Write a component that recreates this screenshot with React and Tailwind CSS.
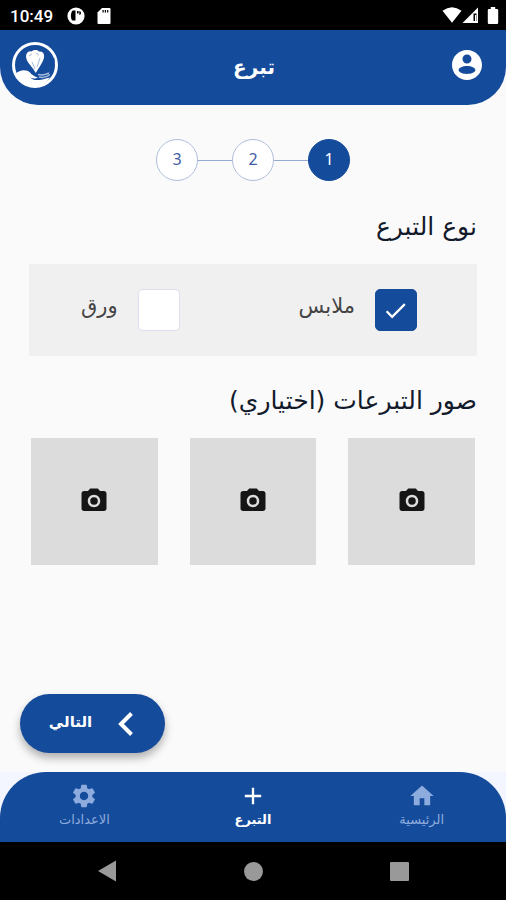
import React, { useState } from "react";
import {
  MdAdd,
  MdCheck,
  MdHome,
  MdSettings,
} from "react-icons/md";

function StatusBar() {
  return (
    <div dir="ltr" className="flex h-[30px] items-center justify-between bg-black pr-1 pl-[10px] font-['Roboto',sans-serif] text-white">
      <div className="flex items-center pt-[2px]">
        <span className="text-[17px] leading-5 font-medium">10:49</span>
        <svg viewBox="0 0 18 18" className="ml-[14px] size-[18px]" aria-hidden="true">
          <circle cx="9" cy="9" r="8.6" fill="#fff" />
          <path d="M6 3.5C3.600 4.200 3.200 12 5.400 13.500H8.500V3.500Z" fill="#000" />
          <path d="M10 4h1.600v2.500H10zM12.300 4c2.300.2 2.300 3.800 0 4z" fill="#000" />
        </svg>
        <svg viewBox="0 0 14 16" className="ml-[12px] h-4 w-[14px]" aria-hidden="true">
          <path d="M5 0H12.500Q13.500 0 13.500 1V15Q13.500 16 12.500 16H1.500Q.5 16 .5 15V4.500Z" fill="#fff" />
          <path d="M5.500 2h1.200v2.500H5.500zM7.800 2H9v2.500H7.800zM10.100 2h1.200v2.500h-1.200z" fill="#000" />
        </svg>
      </div>
      <div className="flex items-center">
        <svg viewBox="0 0 20 16" className="h-4 w-5" aria-hidden="true">
          <path d="M.5 3.800Q10-3.200 19.500 3.800L10 15.800Z" fill="#fff" />
        </svg>
        <svg viewBox="0 0 17 17" className="size-[17px]" aria-hidden="true">
          <path d="M16 .5V16H.5Z" fill="#fff" />
          <path d="M11.500 6.500h3V14h-3z" fill="#000" />
          <path d="M13 8h1.200v6H13z" fill="#fff" />
        </svg>
        <svg viewBox="0 0 12 17" className="mr-[3px] ml-2 h-[17px] w-3" aria-hidden="true">
          <path d="M3.800 0h4.400v2H10q1.200 0 1.200 1.200v12.600Q11.200 17 10 17H2Q.8 17 .8 15.800V3.200Q.8 2 2 2h1.800Z" fill="#fff" />
        </svg>
      </div>
    </div>
  );
}

function AccountIcon() {
  return (
    <svg viewBox="0 0 24 24" className="size-9" fill="currentColor" aria-hidden="true">
      <path d="M12 2C6.480 2 2 6.480 2 12s4.480 10 10 10 10-4.480 10-10S17.520 2 12 2zm0 3c1.660 0 3 1.340 3 3s-1.340 3-3 3-3-1.340-3-3 1.340-3 3-3zm0 13c-3 0-5.600-1-5.600-2.600S9 12.700 12 12.700s5.600 1.100 5.600 2.700S15 18 12 18z" />
    </svg>
  );
}

function CameraIcon() {
  return (
    <svg viewBox="0 0 24 24" className="size-[30px] text-[#151515]" fill="currentColor" aria-hidden="true">
      <circle cx="12" cy="12" r="3" />
      <path d="M9 2 7.170 4H4c-1.100 0-2 .9-2 2v12c0 1.100.9 2 2 2h16c1.100 0 2-.9 2-2V6c0-1.100-.9-2-2-2h-3.170L15 2H9zm3 15c-2.760 0-5-2.240-5-5s2.240-5 5-5 5 2.240 5 5-2.240 5-5 5z" />
    </svg>
  );
}

function CharityLogo() {
  return (
    <svg viewBox="0 0 48 48" className="size-12" role="img" aria-label="شعار">
      <circle cx="24" cy="24" r="21.500" fill="none" stroke="#fff" strokeWidth="3" />
      <path d="M15.500 18C14 13 17 9.500 20.500 10.500C23 8.500 26 8.600 28 10.500C32 9.800 34.300 13.500 32.600 18C31.500 22 27.500 27 24.800 32C22.300 27 16.800 22.500 15.500 18Z" fill="#fff" />
      <path d="M18 15l3-2M25 12l3 2M21 21l3 7M29 17l-3 9" fill="none" stroke="#7d9ccc" strokeWidth=".7" />
      <path d="M4.500 33C9 28 16 28.500 19 31.500C21 34 23.500 35.500 27 36.500C24 38 21.500 37.500 19 36.200C23 40.500 28 39.500 39 36.500C34 44.500 27 46.500 20 45C12 43.500 7 39 4.500 33Z" fill="#fff" />
      <path d="M28 36c4 1 8 .2 11-2.500M27 33.500c4 1 8 0 11-1.500" fill="none" stroke="#a8bddf" strokeWidth="1.400" />
      <path d="M41 16v6l2 3M43 17v5" fill="none" stroke="#144b9b" strokeWidth="1" />
    </svg>
  );
}

function Header() {
  return (
    <header className="flex h-[75px] items-center justify-between rounded-b-[38px] bg-[#144b9b] pr-[21px] pb-[6px] pl-[11px] text-white">
      <button type="button" aria-label="الحساب">
        <AccountIcon />
      </button>
      <h1 className="pt-1 text-[20px] leading-8 font-bold">تبرع</h1>
      <CharityLogo />
    </header>
  );
}

function Stepper() {
  const base = "flex size-[42px] items-center justify-center rounded-full border pb-[2px] text-[16px]";
  return (
    <ol className="flex items-center justify-center font-['Noto_Sans',sans-serif]">
      <li aria-current="step" className={`${base} border-[#144b9b] bg-[#144b9b] text-white`}>1</li>
      <li aria-hidden="true" className="h-px w-[34px] bg-[#93a9d2]" />
      <li className={`${base} border-[#b0bedd] bg-white text-[#3f5da5]`}>2</li>
      <li aria-hidden="true" className="h-px w-[34px] bg-[#93a9d2]" />
      <li className={`${base} border-[#b0bedd] bg-white text-[#3f5da5]`}>3</li>
    </ol>
  );
}

function TypeOption({ id, label, initial }) {
  const [checked, setChecked] = useState(initial);
  return (
    <div className="flex items-center gap-5">
      <span className="relative flex size-[42px]">
        <input
          id={id}
          type="checkbox"
          checked={checked}
          onChange={(e) => setChecked(e.target.checked)}
          className="size-full appearance-none rounded-[5px] border border-[#dcdff0] bg-white checked:border-[#144b9b] checked:bg-[#144b9b]"
        />
        {checked && <MdCheck className="pointer-events-none absolute inset-2 size-[27px] text-white" />}
      </span>
      <label htmlFor={id} className="pb-2 text-[21px] leading-7 text-[#444]">{label}</label>
    </div>
  );
}

function PhotoTile({ number }) {
  return (
    <button type="button" aria-label={`صورة ${number}`} className="flex aspect-square items-center justify-center bg-[#dcdcdc]">
      <CameraIcon />
    </button>
  );
}

function NavItem({ icon: Icon, label, active }) {
  return (
    <a
      href="#"
      aria-current={active ? "page" : undefined}
      className={`flex flex-1 flex-col items-center ${active ? "text-white" : "text-[#8eabde]"}`}
    >
      <Icon className="size-7" />
      <span className={active ? "text-[13px] leading-5 font-bold" : "text-[13px] leading-5"}>{label}</span>
    </a>
  );
}

function SystemNav() {
  return (
    <div dir="ltr" className="flex h-[58px] items-center justify-center gap-[127px] bg-black text-[#999]">
      <svg viewBox="0 0 20 22" className="h-[22px] w-5" aria-hidden="true">
        <path d="M19 .5V21.500L1 11Z" fill="currentColor" />
      </svg>
      <span className="size-[19px] rounded-full bg-[#999]" />
      <span className="size-[19px] rounded-[1px] bg-[#999]" />
    </div>
  );
}

export default function App() {
  return (
    <div dir="rtl" lang="ar" className="flex min-h-screen flex-col bg-[#fafafa] font-['DejaVu_Sans',sans-serif]">
      <StatusBar />
      <Header />
      <main className="flex flex-1 flex-col pt-[34px]">
        <Stepper />
        <div className="flex flex-col px-[29px]">
          <h2 className="mt-[26px] text-[25px] leading-10 text-[#121a2b]">نوع التبرع</h2>
          <div className="mt-[17px] flex h-[92px] items-center justify-between bg-[#f0f0f0] pr-[60px] pl-[52px]">
            <TypeOption id="clothes" label="ملابس" initial={true} />
            <TypeOption id="paper" label="ورق" initial={false} />
          </div>
          <h2 className="mt-[25px] text-[25px] leading-10 text-[#121a2b]">صور التبرعات (اختياري)</h2>
          <div className="mt-[17px] grid grid-cols-3 gap-8 px-[2px]">
            <PhotoTile number={1} />
            <PhotoTile number={2} />
            <PhotoTile number={3} />
          </div>
        </div>
        <div className="mt-auto flex justify-end pb-[19px] pl-5">
          <button type="button" className="flex h-[59px] w-[145px] items-center justify-center gap-6 rounded-full bg-[#144b9b] text-white shadow-[0_5px_8px_rgba(0,0,0,0.3)]">
            <svg viewBox="0 0 20 26" className="h-[26px] w-5" aria-hidden="true">
              <path d="M15.500 2.500L5 13L15.500 23.500" fill="none" stroke="currentColor" strokeWidth="4" />
            </svg>
            <span className="pb-1 text-[15px] leading-6 font-bold">التالي</span>
          </button>
        </div>
      </main>
      <div className="bg-[#f3f5ff]">
        <nav className="flex h-[70px] rounded-t-[46px] bg-[#144b9b] pt-[10px]">
          <NavItem icon={MdHome} label="الرئيسية" />
          <NavItem icon={MdAdd} label="التبرع" active />
          <NavItem icon={MdSettings} label="الاعدادات" />
        </nav>
      </div>
      <SystemNav />
    </div>
  );
}
